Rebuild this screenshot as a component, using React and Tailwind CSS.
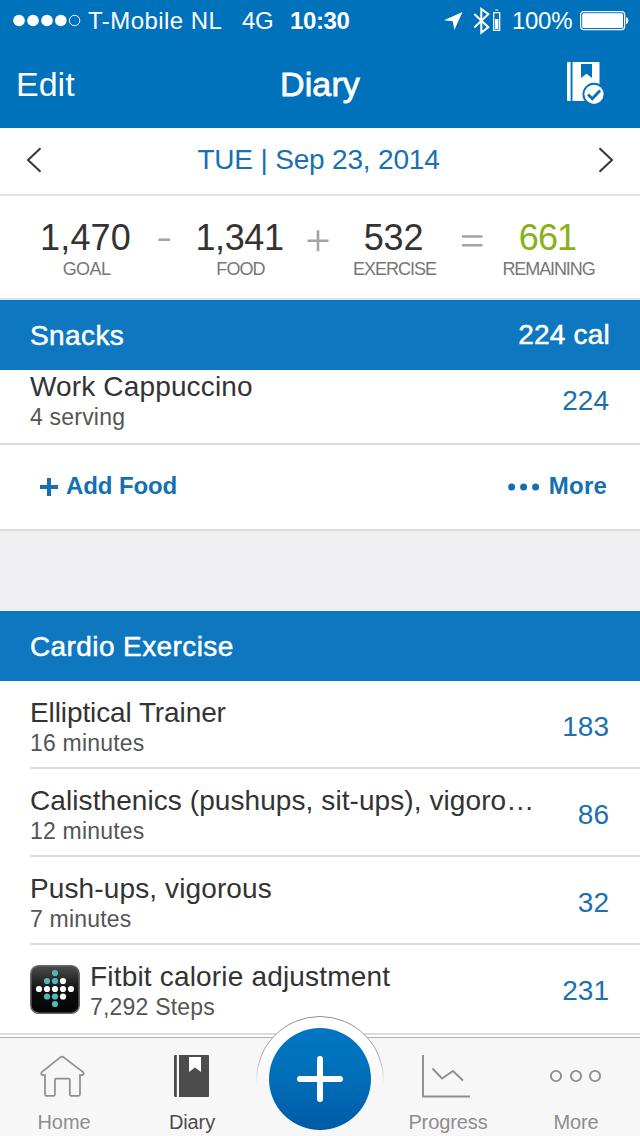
const totals = [
  { value: "1,470", label: "GOAL", color: "text-[#333333]", valueSpacing: "tracking-[0.2px]", spacing: "tracking-[-0.6px]" },
  { value: "1,341", label: "FOOD", color: "text-[#333333]", valueSpacing: "tracking-[-0.4px]", spacing: "tracking-[-0.9px]" },
  { value: "532", label: "EXERCISE", color: "text-[#333333]", valueSpacing: "tracking-[-0.2px]", spacing: "tracking-[-1px]" },
  { value: "661", label: "REMAINING", color: "text-[#86b118]", valueSpacing: "tracking-[-0.8px]", spacing: "tracking-[-1.1px]" },
];

const operators = ["minus", "plus", "equals"];

const exercises = [
  { name: "Elliptical Trainer", detail: "16 minutes", calories: 183, spacing: "tracking-[-0.1px]" },
  { name: "Calisthenics (pushups, sit-ups), vigoro…", detail: "12 minutes", calories: 86, spacing: "tracking-[0.08px]" },
  { name: "Push-ups, vigorous", detail: "7 minutes", calories: 32, spacing: "tracking-[0.12px]" },
  { name: "Fitbit calorie adjustment", detail: "7,292 Steps", calories: 231, spacing: "tracking-[0.18px]", fitbit: true },
];

const fitbitDots = [
  [25, 8, 1],
  [17, 16, 1], [25, 16, 1], [33, 16, 0],
  [9, 24, 0], [17, 24, 0], [25, 24, 0], [33, 24, 0], [41, 24, 0],
  [17, 31.5, 1], [25, 31.5, 1], [33, 31.5, 0],
  [25, 39, 1],
];

function StatusBar() {
  return (
    <div className="flex h-[41px] items-center pt-px text-2xl leading-10">
      <svg className="ml-3 shrink-0" width="70" height="14" viewBox="0 0 70 14" fill="white">
        <circle cx="7" cy="6.5" r="5.8" />
        <circle cx="21" cy="6.5" r="5.8" />
        <circle cx="35" cy="6.5" r="5.8" />
        <circle cx="48.8" cy="6.5" r="5.8" />
        <circle cx="62.6" cy="6.5" r="5.2" fill="none" stroke="white" />
      </svg>
      <span className="ml-[6px] w-[154px] tracking-[0.45px]">T-Mobile NL</span>
      <span className="w-[48px] tracking-[-0.3px]">4G</span>
      <span className="w-[153px] font-bold tracking-[-0.4px]">10:30</span>
      <svg className="shrink-0" width="60" height="28" viewBox="0 0 60 28">
        <path d="M19.5 5 1 13.2l8.8 1.1L11.3 23Z" fill="white" />
        <path d="m31.3 7 14 13.2-7 5.4V2l7 5.2-14 13.3" fill="none" stroke="white" strokeWidth="2" />
        <path d="M50.7 5.7h6v17.6h-6zM52.2 3h3" fill="none" stroke="white" strokeWidth="1.2" />
        <path d="M52 12h3.4v10H52z" fill="white" />
      </svg>
      <span className="ml-[9px] w-[67px] tracking-[-0.3px]">100%</span>
      <svg className="shrink-0" width="51" height="22" viewBox="0 0 51 22">
        <rect x="1.6" y="1.6" width="44" height="18" rx="3" fill="none" stroke="white" strokeWidth="1.2" />
        <rect x="3.2" y="3.2" width="40.8" height="14.8" rx="1.6" fill="white" />
        <path d="M47 7q2.4.6 2.4 3.6T47 14.2Z" fill="white" />
      </svg>
    </div>
  );
}

function Operator({ type }) {
  return (
    <svg className="mt-[34px] shrink-0" width="44" height="22" viewBox="0 0 44 22" stroke="#a3a3a3" strokeWidth="2.6">
      {type === "minus" && <path d="M16.5 9.7H28" />}
      {type === "plus" && <path d="M11.5 10.7h21M22 .2v21" />}
      {type === "equals" && <path d="M12 6.5h20.5M12 15.3h20.5" />}
    </svg>
  );
}

function SectionHeader({ title, total }) {
  return (
    <div className="flex h-[70px] items-center justify-between bg-[#0d78c0] pr-[30px] pl-[30px] text-[28px] text-white [-webkit-text-stroke:0.5px_white]">
      <span className="pt-[2px] tracking-[0.4px]">{title}</span>
      {total && <span className="tracking-[0.2px]">{total}</span>}
    </div>
  );
}

function FitbitIcon() {
  return (
    <svg className="mt-[3px] mr-[10px] shrink-0" width="50" height="49" viewBox="0 0 50 49">
      <defs>
        <linearGradient id="fitbit" x1="0" y1="0" x2="0" y2="1">
          <stop offset="0" stopColor="#4c4c4c" />
          <stop offset="0.55" stopColor="#0c0c0c" />
          <stop offset="1" stopColor="#050505" />
        </linearGradient>
      </defs>
      <rect x="0.8" y="0.8" width="48.4" height="47.4" rx="8" fill="url(#fitbit)" stroke="#666" strokeWidth="1.6" />
      {fitbitDots.map(([x, y, teal]) => (
        <circle key={`${x}-${y}`} cx={x} cy={y} r="3.1" fill={teal ? "#4fb6ba" : "#ffffff"} />
      ))}
    </svg>
  );
}

function EntryText({ name, detail, spacing }) {
  return (
    <div className="grow whitespace-nowrap">
      <p className={`text-[28px] leading-[30px] text-[#333333] ${spacing}`}>{name}</p>
      <p className="text-[23px] leading-[30px] tracking-[0.2px] text-[#555555]">{detail}</p>
    </div>
  );
}

function ExerciseRow({ item, last }) {
  return (
    <div className={last ? "border-b-2 border-[#dcdcdc]" : "ml-[30px] border-b-2 border-[#dcdcdc]"}>
      <div className={last ? "flex h-[88px] pt-[17px] pr-[31px] pl-[30px]" : "flex h-[86px] pt-[17px] pr-[31px]"}>
        {item.fitbit && <FitbitIcon />}
        <EntryText name={item.name} detail={item.detail} spacing={item.spacing} />
        <span className="mt-[13px] text-[28px] leading-[32px] text-[#1a70b0]">{item.calories}</span>
      </div>
    </div>
  );
}

function Tab({ label, active, children }) {
  return (
    <div className={active ? "flex flex-col items-center text-[#4c4c4c]" : "flex flex-col items-center text-[#8e8e8e]"}>
      <svg className="mt-[13px]" width="56" height="52" viewBox="0 0 56 52" fill="none" stroke="currentColor">
        {children}
      </svg>
      <span className="mt-[7px] text-xl leading-6 tracking-[-0.1px]">{label}</span>
    </div>
  );
}

function AddButton() {
  return (
    <svg className="absolute bottom-0 left-[254px]" width="132" height="122" viewBox="0 0 132 122">
      <defs>
        <linearGradient id="add" x1="0" y1="0" x2="0" y2="1">
          <stop offset="0" stopColor="#0076c2" />
          <stop offset="0.5" stopColor="#006eb9" />
          <stop offset="1" stopColor="#005ba5" />
        </linearGradient>
        <linearGradient id="halo" x1="0" y1="2" x2="0" y2="70" gradientUnits="userSpaceOnUse">
          <stop offset="0.4" stopColor="#ffffff" />
          <stop offset="1" stopColor="#f7f7f8" />
        </linearGradient>
        <linearGradient id="ring" x1="0" y1="2" x2="0" y2="70" gradientUnits="userSpaceOnUse">
          <stop offset="0" stopColor="#8c8c8c" />
          <stop offset="0.6" stopColor="#aaaaaa" />
          <stop offset="1" stopColor="#f7f7f8" />
        </linearGradient>
      </defs>
      <path d="M2.5 69v-3a63.5 63.5 0 0 1 127 0v3Z" fill="url(#halo)" />
      <path d="M2.5 69v-3a63.5 63.5 0 0 1 127 0v3" fill="none" stroke="url(#ring)" />
      <circle cx="66" cy="65" r="51" fill="url(#add)" />
      <path d="M46 65h40M66 45v40" stroke="white" strokeWidth="6" strokeLinecap="round" />
    </svg>
  );
}

export default function App() {
  return (
    <div className="relative flex h-[1136px] w-[640px] flex-col overflow-hidden bg-white font-['Liberation_Sans',Arial,sans-serif]">
      <header className="h-[128px] shrink-0 bg-[#0072bc] text-white">
        <StatusBar />
        <div className="grid h-[87px] grid-cols-3 text-[34px]">
          <span className="pt-[23px] pl-[16px] leading-[40px]">Edit</span>
          <span className="pt-[23px] text-center leading-[40px] tracking-[0.1px] [-webkit-text-stroke:0.8px_white]">Diary</span>
          <svg className="mt-[19px] mr-[32px] justify-self-end" width="42" height="46" viewBox="0 0 42 46">
            <path d="M2 2h2.6v39H2q-1-.2-1-1V3q0-1 1-1ZM6.5 2h26q1 0 1 1v38h-27Z" fill="white" />
            <path d="M15 4h11v14l-5.5-4.2L15 18Z" fill="#0072bc" />
            <circle cx="28" cy="34.3" r="11.5" fill="#0072bc" />
            <circle cx="28" cy="34.3" r="9.6" fill="white" />
            <path d="m22.1 34.5 4.2 4.3 7.8-8.3" fill="none" stroke="#0072bc" strokeWidth="2.8" />
          </svg>
        </div>
      </header>

      <div className="flex h-[68px] shrink-0 items-center justify-between border-b-2 border-[#e2e2e2] px-[26px] pb-[3px]">
        <svg width="16" height="26" viewBox="0 0 16 26" fill="none" stroke="#333333" strokeWidth="2">
          <path d="M14.5 1.2 2 13l12.5 11.8" />
        </svg>
        <span className="-ml-[3px] text-[28px] tracking-[-0.18px] text-[#1870b0]">TUE | Sep 23, 2014</span>
        <svg width="16" height="26" viewBox="0 0 16 26" fill="none" stroke="#333333" strokeWidth="2">
          <path d="M1.5 1.2 14 13 1.5 24.8" />
        </svg>
      </div>

      <div className="flex h-[104px] shrink-0 border-b-2 border-[#d3e7f3] pl-[31.5px]">
        {totals.map((item, i) => (
          <div key={item.label} className="flex">
            <div className="flex w-[110px] flex-col items-center pt-[21px]">
              <span className={`-ml-[2px] text-[36px] leading-[42px] ${item.valueSpacing} ${item.color}`}>{item.value}</span>
              <span className={`text-[18px] leading-5 text-[#777777] ${item.spacing}`}>{item.label}</span>
            </div>
            {i < 3 && <Operator type={operators[i]} />}
          </div>
        ))}
      </div>

      <SectionHeader title="Snacks" total="224 cal" />
      <div className="flex h-[75px] shrink-0 border-b-2 border-[#dcdcdc] pt-[2px] pr-[31px] pl-[30px]">
        <EntryText name="Work Cappuccino" detail="4 serving" spacing="tracking-[0.15px]" />
        <span className="mt-[13px] text-[28px] leading-[32px] text-[#1a70b0]">224</span>
      </div>
      <div className="flex h-[86px] shrink-0 items-center justify-between border-b-2 border-[#dcdcdc] pr-[33px] pb-[2px] pl-[39px] text-2xl font-bold text-[#1470b2]">
        <span className="flex items-center tracking-[-0.1px]">
          <svg className="mt-[3px] mr-[8px]" width="19" height="19" viewBox="0 0 19 19" stroke="currentColor" strokeWidth="4">
            <path d="M1 9h18M10 0v18" />
          </svg>
          Add Food
        </span>
        <span className="flex items-center tracking-[0.2px]">
          <svg className="mt-[2px] mr-[9px]" width="32" height="8" viewBox="0 0 32 8" fill="currentColor">
            <circle cx="3.6" cy="4" r="3.5" />
            <circle cx="15.6" cy="4" r="3.5" />
            <circle cx="27.6" cy="4" r="3.5" />
          </svg>
          More
        </span>
      </div>
      <div className="h-[80px] shrink-0 bg-[#efeff4]" />

      <SectionHeader title="Cardio Exercise" />
      {exercises.map((item, i) => (
        <ExerciseRow key={item.name} item={item} last={i === exercises.length - 1} />
      ))}

      <nav className="absolute inset-x-0 bottom-0 grid h-[99px] grid-cols-5 border-t border-[#acacac] bg-[#f7f7f8]">
        <Tab label="Home">
          <path
            d="M25.5 5.2q1.5-1 3 0l19.5 15q1.3 1.4-.3 2.9H45v19.3q0 1.5-1.5 1.5h-7.3q-1.4 0-1.4-1.5V28q0-1.4-1.3-1.4H21.3q-1.4 0-1.4 1.4v14.4q0 1.5-1.4 1.5h-7q-1.5 0-1.5-1.5V23.1H7.3q-1.9-1.3-.5-2.9Z"
            transform="translate(-1 1)"
            strokeWidth="1.7"
          />
        </Tab>
        <Tab label="Diary" active>
          <path d="M11 4h1.8v42H11q-1-.3-1-1V5q0-1 1-1ZM15 4h29q1 0 1 1v40q0 1-1 1H15Z" fill="currentColor" stroke="none" />
          <path d="M25 6h12v15l-6-4.5-6 4.5Z" fill="white" stroke="none" />
        </Tab>
        <span />
        <Tab label="Progress">
          <path d="M3 4v41.5h47M12.5 17.5l9.5 10 11-7.5 10 9.5" strokeWidth="1.9" />
        </Tab>
        <Tab label="More">
          <g strokeWidth="1.9">
            <circle cx="8" cy="25" r="5.1" />
            <circle cx="28" cy="25" r="5.1" />
            <circle cx="47" cy="25" r="5.1" />
          </g>
        </Tab>
      </nav>
      <AddButton />
    </div>
  );
}
